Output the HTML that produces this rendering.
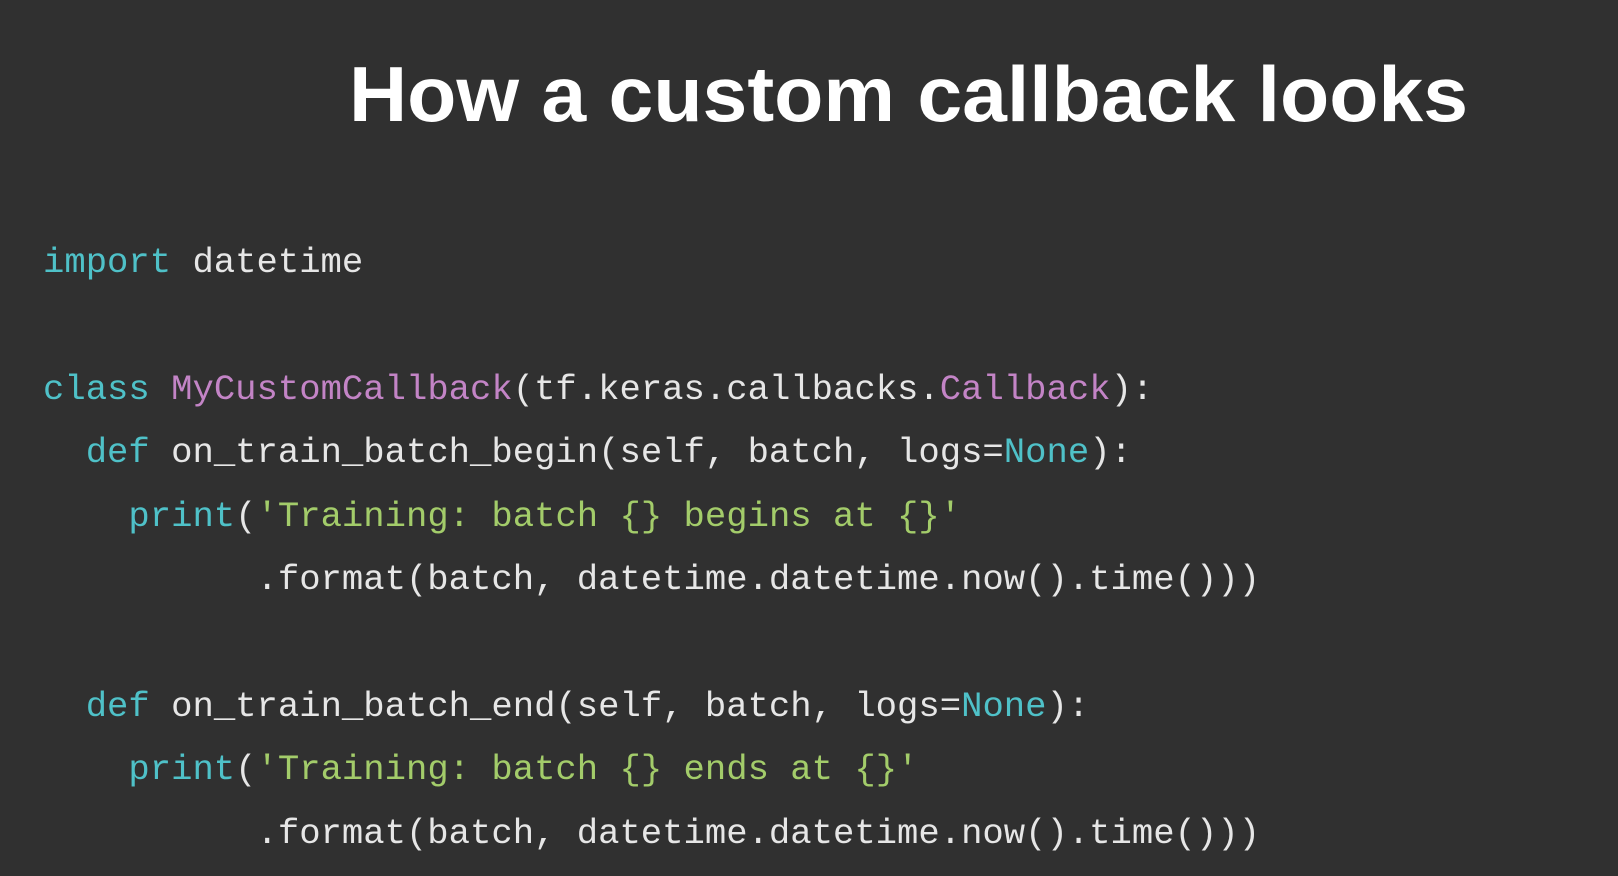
<!DOCTYPE html>
<html><head><meta charset="utf-8"><style>
html,body{margin:0;padding:0;background:#303030;width:1618px;height:876px;overflow:hidden}
svg{position:absolute;left:0;top:0}
pre{position:absolute;left:43px;top:231px;margin:0;font-family:"Liberation Mono",monospace;font-size:35.6px;line-height:63.4px;color:#e6e6e6}
.k{color:#4fc1c8}.p{color:#c384c6}.g{color:#a3cc6a}
</style></head><body>
<svg width="1618" height="876"><text x="349" y="121" textLength="1119" lengthAdjust="spacingAndGlyphs" font-family="Liberation Sans, sans-serif" font-weight="bold" font-size="78" fill="#ffffff">How a custom callback looks</text></svg>
<pre><span class="k">import</span> datetime

<span class="k">class</span> <span class="p">MyCustomCallback</span>(tf.keras.callbacks.<span class="p">Callback</span>):
  <span class="k">def</span> on_train_batch_begin(self, batch, logs=<span class="k">None</span>):
    <span class="k">print</span>(<span class="g">'Training: batch {} begins at {}'</span>
          .format(batch, datetime.datetime.now().time()))

  <span class="k">def</span> on_train_batch_end(self, batch, logs=<span class="k">None</span>):
    <span class="k">print</span>(<span class="g">'Training: batch {} ends at {}'</span>
          .format(batch, datetime.datetime.now().time()))</pre>
</body></html>
